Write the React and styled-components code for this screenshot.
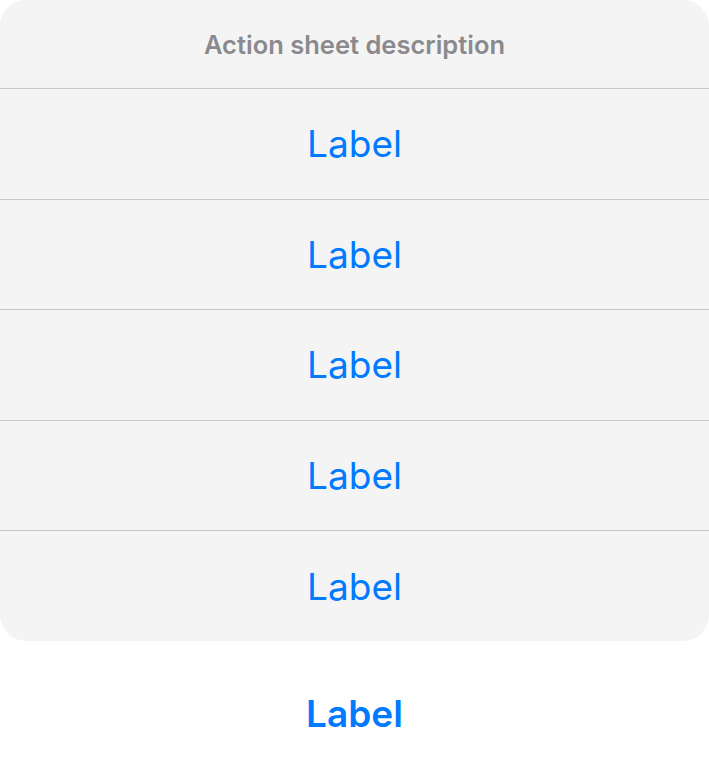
import React from 'react';
import styled, { createGlobalStyle } from 'styled-components';

const Global = createGlobalStyle`
  html, body {
    margin: 0;
    padding: 0;
    background: #ffffff;
    font-family: Inter, "Noto Sans", sans-serif;
  }
`;

const Sheet = styled.div`
  width: 709px;
  display: flex;
  flex-direction: column;
`;

const Group = styled.div`
  background: #f4f4f4;
  border-radius: 26px;
  overflow: hidden;
  display: flex;
  flex-direction: column;
`;

const Description = styled.div`
  height: 88px;
  display: flex;
  align-items: center;
  justify-content: center;
  font-size: 25.5px;
  font-weight: 600;
  color: #8a8a8e;
`;

const Action = styled.button`
  height: 110.6px;
  border: 0;
  border-top: 1px solid #c6c6c8;
  background: transparent;
  display: flex;
  align-items: center;
  justify-content: center;
  font-family: inherit;
  font-size: 37px;
  font-weight: ${(p) => (p.$bold ? 600 : 400)};
  color: #007aff;
  padding: 0;
  cursor: pointer;
`;

const Cancel = styled(Action)`
  margin-top: 18px;
  border-top: 0;
  background: #ffffff;
  border-radius: 26px;
  height: 110px;
`;

export default function App() {
  const actions = ['Label', 'Label', 'Label', 'Label', 'Label'];
  return (
    <>
      <Global />
      <Sheet>
        <Group>
          <Description>Action sheet description</Description>
          {actions.map((a, i) => (
            <Action key={i}>{a}</Action>
          ))}
        </Group>
        <Cancel $bold>Label</Cancel>
      </Sheet>
    </>
  );
}
